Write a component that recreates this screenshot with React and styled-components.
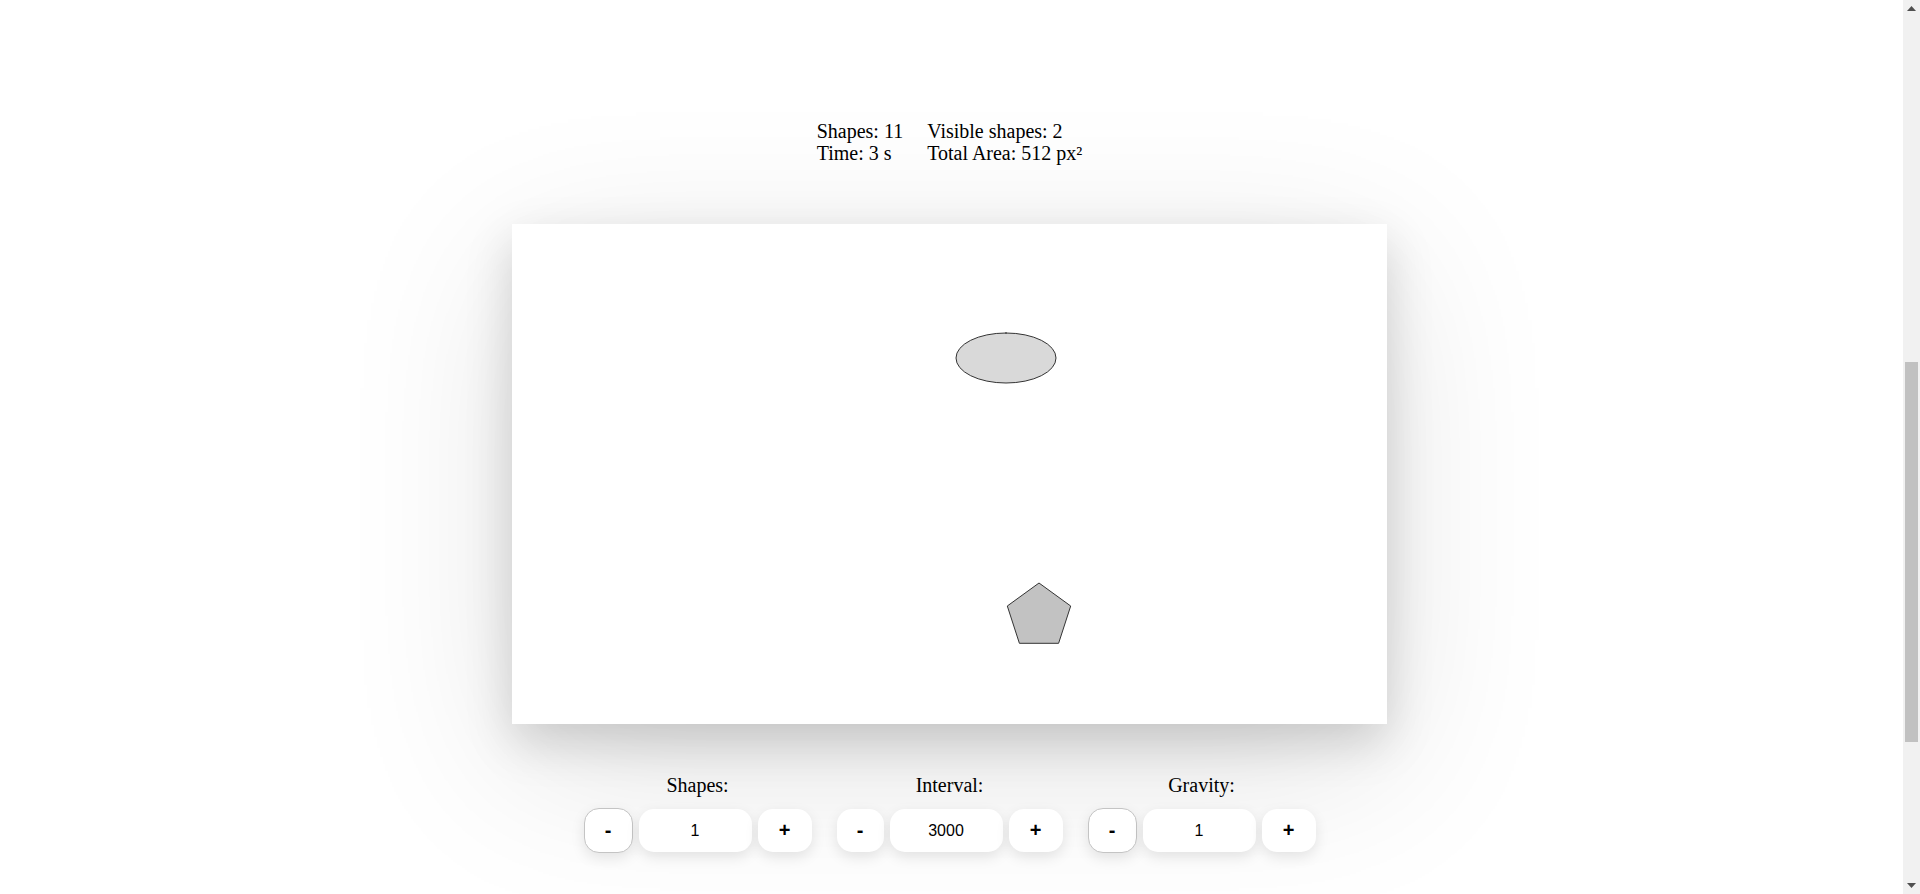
import React from "react";
import styled, { createGlobalStyle } from "styled-components";

const GlobalStyle = createGlobalStyle`
    body {
        margin: 0;
        background: #ffffff;
        font-family: "Liberation Serif", "Times New Roman", serif;
        color: #000000;
        overflow: hidden;
    }
`

const Janela = styled.div`
    display: flex;
    height: 100vh;
`

const Pagina = styled.main`
    flex: 1;
    display: flex;
    flex-direction: column;
    align-items: center;
    padding: 120px 4px 0 0;
`

const Estatisticas = styled.div`
    display: grid;
    grid-template-columns: auto auto;
    column-gap: 24px;
    font-size: 20px;
    line-height: 22px;
`

const Tela = styled.div`
    width: 875px;
    height: 500px;
    margin-top: 60px;
    background: #ffffff;
    box-shadow: 0 18px 45px rgba(0, 0, 0, 0.16), 0 40px 160px rgba(0, 0, 0, 0.12);

    svg {
        display: block;
    }
`

const Controles = styled.div`
    display: flex;
    gap: 25px;
    margin-top: 49px;
`

const Grupo = styled.div`
    display: flex;
    flex-direction: column;
    align-items: center;
    gap: 11px;
`

const Rotulo = styled.span`
    font-size: 20px;
    line-height: 24px;
`

const Linha = styled.div`
    display: flex;
    align-items: center;
    gap: 6px;
    height: 45px;
`

const Botao = styled.button`
    width: ${(props) => (props.$largo ? "54px" : "47px")};
    height: 43px;
    padding: 0;
    border: none;
    border-radius: 15px;
    background: #ffffff;
    font-family: "Liberation Sans", Arial, sans-serif;
    font-size: 20px;
    font-weight: bold;
    color: #000000;
    box-shadow: 0 5px 14px rgba(0, 0, 0, 0.1);

    ${(props) => props.$contorno && `
        width: 49px;
        height: 45px;
        border: 1px solid #c4c4c4;
    `}
`

const Campo = styled.input`
    width: 113px;
    height: 43px;
    box-sizing: border-box;
    padding: 0;
    border: none;
    border-radius: 15px;
    background: #ffffff;
    text-align: center;
    font-family: "Liberation Sans", Arial, sans-serif;
    font-size: 16px;
    color: #000000;
    box-shadow: 0 5px 14px rgba(0, 0, 0, 0.1);
    outline: none;
`

const Rolagem = styled.aside`
    width: 17px;
    display: flex;
    flex-direction: column;
    background: #f1f1f1;
`

const Seta = styled.div`
    height: 17px;
    display: flex;
    align-items: center;
    justify-content: center;
`

const Trilho = styled.div`
    flex: 1;
    padding: 345px 2px 0 2px;
`

const Polegar = styled.div`
    height: 380px;
    background: #c1c1c1;
`

const controles = [
    { nome: "Shapes:", valor: "1", contorno: true },
    { nome: "Interval:", valor: "3000", contorno: false },
    { nome: "Gravity:", valor: "1", contorno: true },
]

function Formas() {
    return (
        <svg width="875" height="500" viewBox="0 0 875 500">
            <ellipse cx="494" cy="134" rx="50" ry="25" fill="#d9d9d9" stroke="#333" strokeWidth="1" />
            <line x1="494" y1="108" x2="494" y2="110" stroke="#333" strokeWidth="1" />
            <polygon
                points="527,359 558.7,382 546.6,419.3 507.4,419.3 495.3,382"
                fill="#c2c2c2"
                stroke="#333"
                strokeWidth="1"
            />
        </svg>
    )
}

function App() {
    return (
        <>
            <GlobalStyle />
            <Janela>
                <Pagina>
                    <Estatisticas>
                        <span>Shapes: 11</span>
                        <span>Visible shapes: 2</span>
                        <span>Time: 3 s</span>
                        <span>Total Area: 512 px²</span>
                    </Estatisticas>

                    <Tela>
                        <Formas />
                    </Tela>

                    <Controles>
                        {controles.map((item) => (
                            <Grupo key={item.nome}>
                                <Rotulo>{item.nome}</Rotulo>
                                <Linha>
                                    <Botao $contorno={item.contorno}>-</Botao>
                                    <Campo type="text" defaultValue={item.valor} />
                                    <Botao $largo>+</Botao>
                                </Linha>
                            </Grupo>
                        ))}
                    </Controles>
                </Pagina>

                <Rolagem>
                    <Seta>
                        <svg width="9" height="5" viewBox="0 0 9 5">
                            <polygon points="0,5 4.5,0 9,5" fill="#505050" />
                        </svg>
                    </Seta>
                    <Trilho>
                        <Polegar />
                    </Trilho>
                    <Seta>
                        <svg width="9" height="5" viewBox="0 0 9 5">
                            <polygon points="0,0 9,0 4.5,5" fill="#505050" />
                        </svg>
                    </Seta>
                </Rolagem>
            </Janela>
        </>
    )
}

export default App;
